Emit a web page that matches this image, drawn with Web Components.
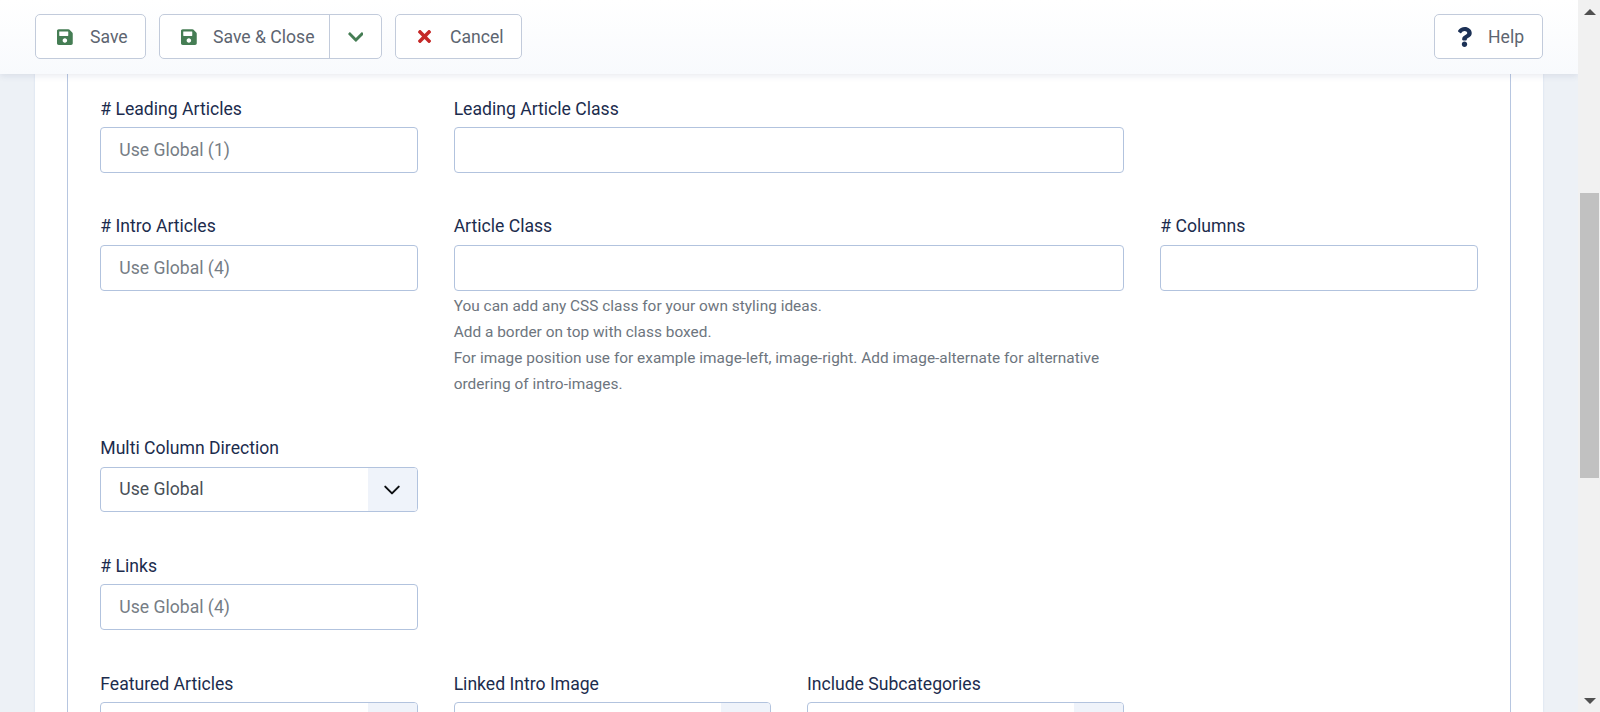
<!DOCTYPE html>
<html>
<head>
<meta charset="utf-8">
<title>Edit</title>
<style>
  html, body { margin: 0; height: 712px; overflow: hidden; }
  body { font-family: Roboto, "Liberation Sans", sans-serif; background: #edf1f6; }
</style>
</head>
<body>
<admin-page>
  <admin-toolbar slot="toolbar">
    <tool-button icon="save" tone="#457d54" style="--w:111px">Save</tool-button>
    <split-button style="margin-left:13px"></split-button>
    <tool-button icon="times" tone="#c52827" size="19" style="--w:127px;margin-left:13px">Cancel</tool-button>
    <tool-button icon="question" tone="#1c3156" size="20" gap="16" style="--w:109px;margin-left:auto">Help</tool-button>
  </admin-toolbar>
  <form-panel>
    <form-row style="--lift:1px">
      <form-field span="3" label="# Leading Articles" placeholder="Use Global (1)"></form-field>
      <form-field span="6" label="Leading Article Class"></form-field>
    </form-row>
    <form-row style="margin-bottom:39px">
      <form-field span="3" label="# Intro Articles" placeholder="Use Global (4)"></form-field>
      <form-field span="6" label="Article Class" has-help>
        You can add any CSS class for your own styling ideas.<br>
        Add a border on top with class boxed.<br>
        For image position use for example image-left, image-right. Add image-alternate for alternative ordering of intro-images.
      </form-field>
      <form-field span="3" label="# Columns"></form-field>
    </form-row>
    <form-row>
      <form-field span="3" label="Multi Column Direction" value="Use Global" select></form-field>
    </form-row>
    <form-row style="--lift:1px">
      <form-field span="3" label="# Links" placeholder="Use Global (4)"></form-field>
    </form-row>
    <form-row style="--lift:1px">
      <form-field span="3" label="Featured Articles" select></form-field>
      <form-field span="3" label="Linked Intro Image" select></form-field>
      <form-field span="3" label="Include Subcategories" select></form-field>
    </form-row>
  </form-panel>
  <page-scrollbar slot="scrollbar"></page-scrollbar>
</admin-page>

<script>
const ICONS = {
  save: ['0 0 448 512', 'M433.941 129.941l-83.882-83.882A48 48 0 0 0 316.118 32H48C21.49 32 0 53.49 0 80v352c0 26.51 21.49 48 48 48h352c26.51 0 48-21.49 48-48V163.882a48 48 0 0 0-14.059-33.941zM224 416c-35.346 0-64-28.654-64-64 0-35.346 28.654-64 64-64s64 28.654 64 64c0 35.346-28.654 64-64 64zm96-304.52V212c0 6.627-5.373 12-12 12H76c-6.627 0-12-5.373-12-12V108c0-6.627 5.373-12 12-12h228.52c3.183 0 6.235 1.264 8.485 3.515l3.48 3.48A11.996 11.996 0 0 1 320 111.48z'],
  times: ['0 0 352 512', 'M242.72 256l100.07-100.07c12.28-12.28 12.28-32.19 0-44.48l-22.24-22.24c-12.28-12.28-32.19-12.28-44.48 0L176 189.28 75.93 89.21c-12.28-12.28-32.19-12.28-44.48 0L9.21 111.45c-12.28 12.28-12.28 32.19 0 44.48L109.28 256 9.21 356.07c-12.28 12.28-12.28 32.19 0 44.48l22.24 22.24c12.28 12.28 32.2 12.28 44.48 0L176 322.72l100.07 100.07c12.28 12.28 32.2 12.28 44.48 0l22.24-22.24c12.28-12.28 12.28-32.19 0-44.48L242.72 256z'],
  question: ['0 0 384 512', 'M202.021 0C122.202 0 70.503 32.703 29.914 91.026c-7.363 10.58-5.093 25.086 5.178 32.874l43.138 32.709c10.373 7.865 25.132 6.026 33.253-4.148 25.049-31.381 43.63-49.449 82.757-49.449 30.764 0 68.816 19.799 68.816 49.631 0 22.552-18.617 34.134-48.993 51.164-35.423 19.86-82.299 44.576-82.299 106.405V320c0 13.255 10.745 24 24 24h72.471c13.255 0 24-10.745 24-24v-5.773c0-42.86 125.268-44.645 125.268-160.627C377.504 66.256 286.902 0 202.021 0zM192 373.459c-38.196 0-69.271 31.075-69.271 69.271 0 38.195 31.075 69.27 69.271 69.27s69.271-31.075 69.271-69.271-31.075-69.27-69.271-69.27z'],
  chevron: ['0 0 448 512', 'M207.029 381.476L12.686 187.132c-9.373-9.373-9.373-24.569 0-33.941l22.667-22.667c9.357-9.357 24.522-9.375 33.901-.04L224 284.505l154.745-154.021c9.379-9.335 24.544-9.317 33.901.04l22.667 22.667c9.373 9.373 9.373 24.569 0 33.941L240.971 381.476c-9.373 9.372-24.569 9.372-33.942 0z']
};

function iconSvg(name, color, size) {
  const [box, d] = ICONS[name];
  return `<svg viewBox="${box}" height="${size}" fill="${color}"><path d="${d}"/></svg>`;
}

class AdminPage extends HTMLElement {
  constructor() {
    super();
    this.attachShadow({ mode: 'open' }).innerHTML = `
      <style>
        :host { display: grid; grid-template-columns: 1fr 22px; height: 712px; }
        .left { display: flex; flex-direction: column; min-width: 0; height: 712px; overflow: hidden; }
        ::slotted([slot=toolbar]) { flex: none; position: relative; z-index: 2; }
      </style>
      <div class="left">
        <slot name="toolbar"></slot>
        <slot></slot>
      </div>
      <slot name="scrollbar"></slot>
    `;
  }
}

class AdminToolbar extends HTMLElement {
  constructor() {
    super();
    this.attachShadow({ mode: 'open' }).innerHTML = `
      <style>
        :host {
          display: flex; align-items: flex-start; box-sizing: border-box;
          height: 74px; padding: 14px 35px 0 35px;
          background: linear-gradient(#fff, #f8fafd);
          box-shadow: 0 2px 6px rgba(70, 90, 130, .12);
        }
      </style>
      <slot></slot>
    `;
  }
}

class ToolButton extends HTMLElement {
  constructor() {
    super();
    const icon = this.getAttribute('icon');
    const tone = this.getAttribute('tone');
    const gap = this.getAttribute('gap') || 17;
    const size = this.getAttribute('size') || 18;
    this.attachShadow({ mode: 'open' }).innerHTML = `
      <style>
        :host {
          display: flex; align-items: center; box-sizing: border-box;
          width: var(--w); height: 45px; flex: none;
          background: #fff; border: 1px solid #c2cbdb; border-radius: 5px;
          font-size: 17.6px; color: #5d6570; padding-left: 21px;
        }
        .ic { width: 16px; display: flex; justify-content: center; margin-right: ${gap}px; }
      </style>
      <span class="ic">${iconSvg(icon, tone, size)}</span><slot></slot>
    `;
  }
}

class SplitButton extends HTMLElement {
  constructor() {
    super();
    this.attachShadow({ mode: 'open' }).innerHTML = `
      <style>
        :host {
          display: flex; box-sizing: border-box; width: 223px; height: 45px; flex: none;
          background: #fff; border: 1px solid #c2cbdb; border-radius: 5px;
          font-size: 17.6px; color: #5d6570;
        }
        .main { flex: 1; display: flex; align-items: center; padding-left: 21px; }
        .ic { width: 16px; display: flex; justify-content: center; margin-right: 16px; }
        .drop { width: 51px; border-left: 1px solid #c2cbdb; display: flex; align-items: center; justify-content: center; }
      </style>
      <div class="main"><span class="ic">${iconSvg('save', '#457d54', 18)}</span>Save &amp; Close</div>
      <div class="drop">${iconSvg('chevron', '#457d54', 18)}</div>
    `;
  }
}

class FormPanel extends HTMLElement {
  constructor() {
    super();
    this.attachShadow({ mode: 'open' }).innerHTML = `
      <style>
        :host {
          display: block; flex: 1; min-height: 0; box-sizing: border-box;
          margin: 0 35px; padding: 0 32px; background: #fff;
          box-shadow: 0 0 2px rgba(120, 150, 210, .25);
        }
        .fieldset {
          height: 100%; box-sizing: border-box; padding: 22px 32.3px 0;
          border: solid #b7c6e0; border-width: 0 1px;
        }
      </style>
      <div class="fieldset"><slot></slot></div>
    `;
  }
}

class FormRow extends HTMLElement {
  constructor() {
    super();
    this.attachShadow({ mode: 'open' }).innerHTML = `
      <style>
        :host {
          display: grid; grid-template-columns: repeat(12, 1fr); column-gap: 36px;
          margin-bottom: 41px;
        }
      </style>
      <slot></slot>
    `;
  }
}

class FormField extends HTMLElement {
  constructor() {
    super();
    this.style.gridColumn = 'span ' + (this.getAttribute('span') || 3);
    const label = this.getAttribute('label');
    const ph = this.getAttribute('placeholder') || '';
    const value = this.getAttribute('value') || '';
    const isSelect = this.hasAttribute('select');
    const help = this.hasAttribute('has-help') ? '<div class="help"><slot></slot></div>' : '';
    const chevron = `<span class="arrow"><svg viewBox="0 0 16 16" width="18" height="18" fill="none" stroke="#0d0f12" stroke-width="1.8" stroke-linecap="round" stroke-linejoin="round"><path d="M2 5l6 6 6-6"/></svg></span>`;
    this.attachShadow({ mode: 'open' }).innerHTML = `
      <style>
        :host { display: block; min-width: 0; }
        label {
          display: block; font-size: 17.6px; line-height: 24px; color: #1c2c4d;
          padding-top: var(--lift, 0px); margin-bottom: calc(7px - var(--lift, 0px));
        }
        .box {
          display: flex; align-items: stretch; box-sizing: border-box; height: 46px;
          border: 1px solid #b2c3de; border-radius: 4px; background: #fff;
          font-size: 17.6px; overflow: hidden;
        }
        .box.sel { height: 45px; }
        .text { flex: 1; padding-left: 18px; line-height: 44px; }
        .sel .text { line-height: 43px; }
        .ph { color: #767d85; }
        .val { color: #495057; }
        .arrow { width: 49px; background: #eff3fa; display: flex; align-items: center; justify-content: center; }
        .help { font-size: 15.4px; letter-spacing: .02px; line-height: 26px; color: #6d757e; margin-top: 2px; }
      </style>
      <label>${label}</label>
      <div class="box ${isSelect ? 'sel' : ''}">
        <span class="text ${value ? 'val' : 'ph'}">${value || ph}</span>
        ${isSelect ? chevron : ''}
      </div>
      ${help}
    `;
  }
}

class PageScrollbar extends HTMLElement {
  constructor() {
    super();
    this.attachShadow({ mode: 'open' }).innerHTML = `
      <style>
        :host {
          display: flex; flex-direction: column; height: 712px; box-sizing: border-box;
          background: #f1f1f1; padding: 9px 1px 8px 2px;
        }
        svg { display: block; margin: 0 auto; flex: none; }
        .thumb { background: #c1c1c1; height: 285px; margin-top: 178px; flex: none; }
        .sp { flex: 1; }
      </style>
      <svg width="12" height="6" viewBox="0 0 12 6" fill="#505050"><path d="M6 0l6 6H0z"/></svg>
      <div class="thumb"></div>
      <div class="sp"></div>
      <svg width="12" height="6" viewBox="0 0 12 6" fill="#505050"><path d="M0 0h12L6 6z"/></svg>
    `;
  }
}

customElements.define('admin-page', AdminPage);
customElements.define('admin-toolbar', AdminToolbar);
customElements.define('tool-button', ToolButton);
customElements.define('split-button', SplitButton);
customElements.define('form-panel', FormPanel);
customElements.define('form-row', FormRow);
customElements.define('form-field', FormField);
customElements.define('page-scrollbar', PageScrollbar);
</script>
</body>
</html>
